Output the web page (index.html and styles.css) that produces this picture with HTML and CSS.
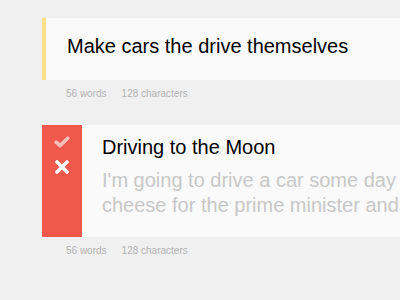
FILE: index.html
```html
<!DOCTYPE html>
<html>
<head>
<meta charset="utf-8">
<link rel="stylesheet" href="styles.css">
</head>
<body>
<div class="list">
  <div class="note">
    <div class="card card-pending">
      <div class="card-text">
        <div class="title">Make cars the drive themselves</div>
      </div>
    </div>
    <div class="meta"><span>56 words</span><span>128 characters</span></div>
  </div>

  <div class="note note-second">
    <div class="card card-swiped">
      <div class="actions">
        <svg class="icon-check" width="16" height="12" viewBox="0 0 16 12">
          <polyline points="2.2,6.2 6,9.6 13.8,2.2" fill="none" stroke="#fff" stroke-opacity="0.62" stroke-width="3.6" stroke-linecap="round" stroke-linejoin="round"/>
        </svg>
        <svg class="icon-x" width="14" height="14" viewBox="0 0 14 14">
          <path d="M2 2 L12 12 M12 2 L2 12" fill="none" stroke="#fff" stroke-width="3.6" stroke-linecap="round"/>
        </svg>
      </div>
      <div class="card-text card-text-second">
        <div class="title">Driving to the Moon</div>
        <div class="body">
          <span class="line">I'm going to drive a car some day</span>
          <span class="line">cheese for the prime minister and</span>
        </div>
      </div>
    </div>
    <div class="meta"><span>56 words</span><span>128 characters</span></div>
  </div>
</div>
</body>
</html>
```

FILE: styles.css
```css
html, body {
  margin: 0;
  padding: 0;
}
body {
  background: #f0f0f0;
  width: 400px;
  height: 300px;
  overflow: hidden;
  font-family: "Liberation Sans", Arial, Helvetica, sans-serif;
}
.list {
  padding: 18px 0 0 42px;
}
.note-second {
  margin-top: 24px;
}
.card {
  display: flex;
  background: #fafafa;
  overflow: hidden;
}
.card-pending {
  border-left: 4px solid #fde088;
  height: 62px;
}
.card-swiped {
  height: 112px;
}
.card-text {
  padding: 16px 0 0 21px;
  flex: 1;
  min-width: 0;
}
.card-text-second {
  padding: 10px 0 0 20px;
}
.title {
  font-size: 20px;
  line-height: 25px;
  color: #000;
  white-space: nowrap;
}
.body {
  margin-top: 8px;
  font-size: 20px;
  line-height: 25px;
  color: #c8c8c8;
}
.line {
  display: block;
  white-space: nowrap;
}
.actions {
  width: 40px;
  flex: none;
  background: #f1584c;
  display: flex;
  flex-direction: column;
  align-items: center;
  padding-top: 11px;
  gap: 12px;
}
.icon-check, .icon-x {
  display: block;
}
.meta {
  display: flex;
  gap: 15px;
  padding-left: 24px;
  margin-top: 7px;
  font-size: 10px;
  line-height: 14px;
  color: #b3b3b3;
}
```
